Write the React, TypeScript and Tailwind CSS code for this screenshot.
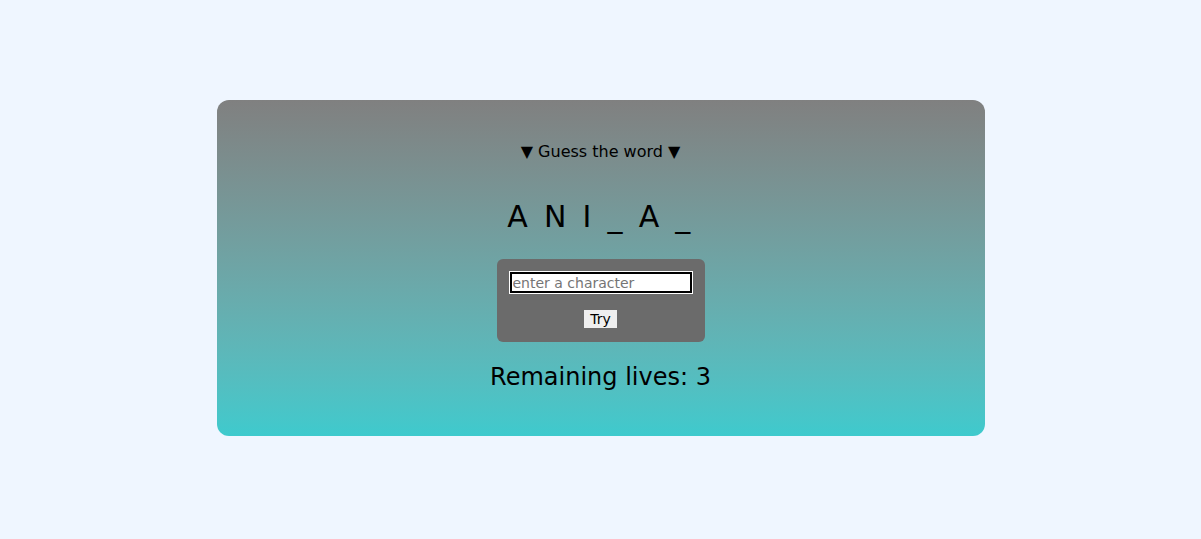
import React from 'react';

export default function App() {
    return (
        <div className="min-h-screen w-full bg-[#eff6ff] pt-[100px] font-['DejaVu_Sans',sans-serif]">
            {/* Game card */}
            <div className="mx-auto w-[768px] h-[336px] rounded-xl bg-gradient-to-b from-[#808080] to-[#3ecacd] flex flex-col items-center pt-[42px]">
                <p className="text-[16px] leading-5 text-black">▼ Guess the word ▼</p>

                <h1 className="mt-[37px] text-[30px] leading-9 tracking-[0.11em] text-black">A N I _ A _</h1>

                <div className="mt-[24px] w-[208px] h-[83px] rounded-md bg-[#6b6b6b] flex flex-col items-center pt-[13px]">
                    <input
                        type="text"
                        placeholder="enter a character"
                        className="w-[182px] h-[21px] bg-white border-2 border-black outline outline-1 outline-white text-[14px] leading-4 px-[1px] text-black placeholder:text-[#757575]"
                    />
                    <button className="mt-[17px] h-[18px] px-[6px] bg-[#efefef] text-[14px] leading-4 text-black">Try</button>
                </div>

                <p className="mt-[19px] text-[24px] leading-8 text-black">Remaining lives: 3</p>
            </div>
        </div>
    );
}
